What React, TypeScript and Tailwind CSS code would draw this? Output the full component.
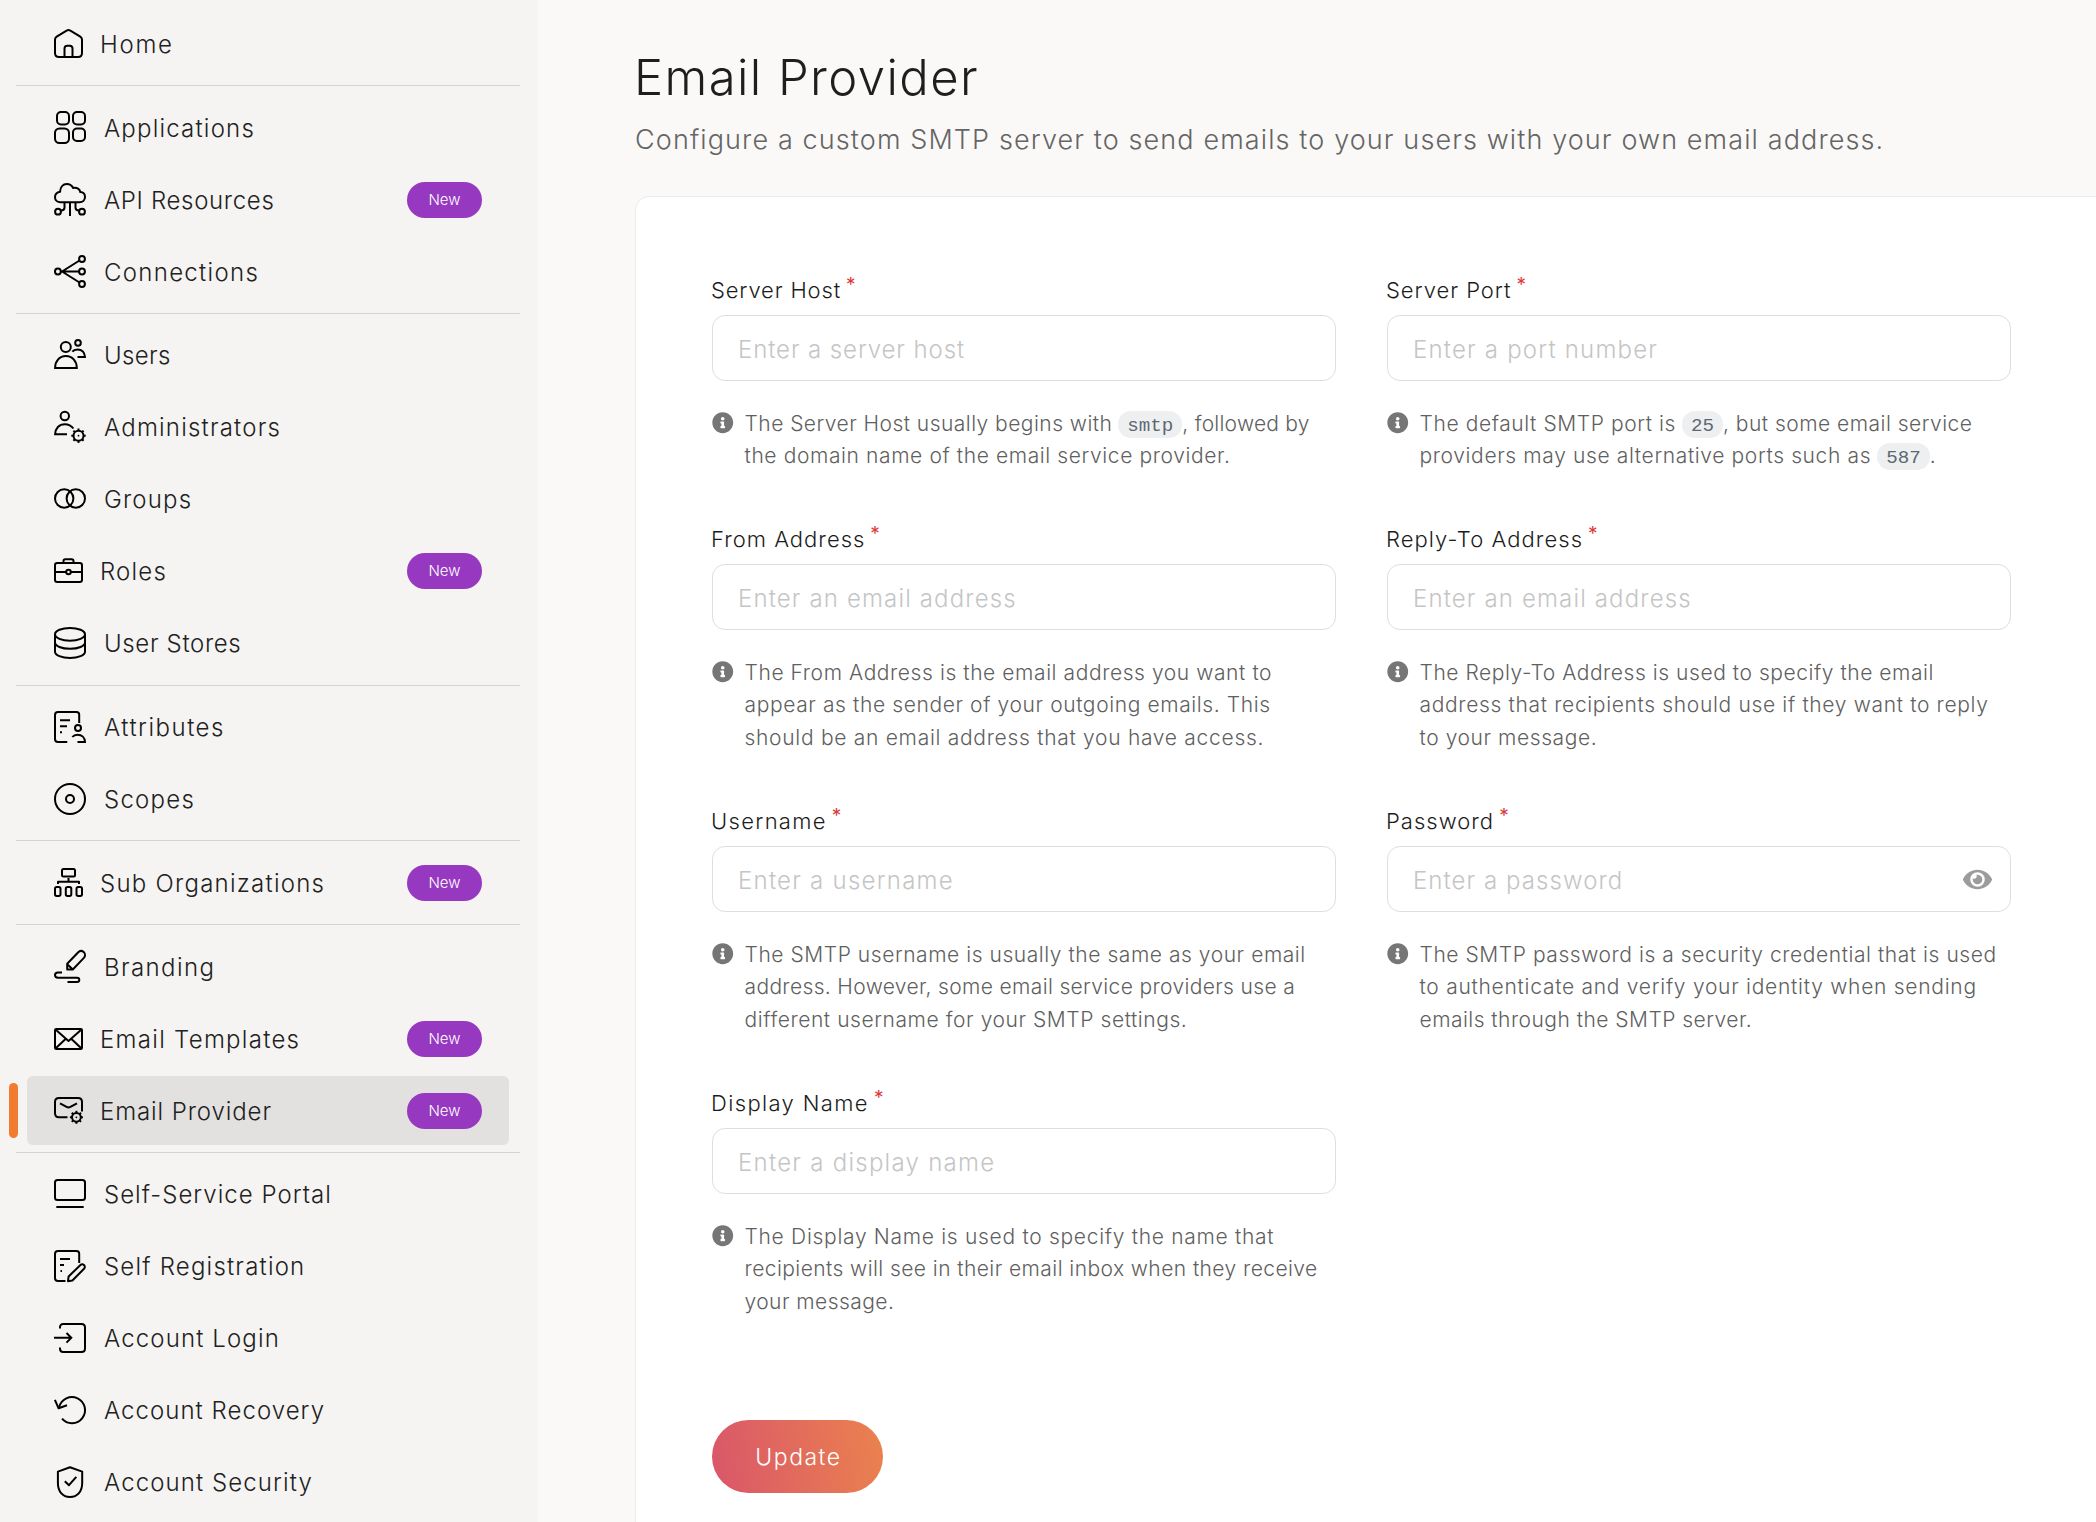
import React from "react";
import { FaEye, FaInfoCircle } from "react-icons/fa";

type IconProps = { w: number; h: number; children: React.ReactNode };

function Glyph({ w, h, children }: IconProps) {
  return (
    <svg
      width={w}
      height={h}
      viewBox={`0 0 ${w} ${h}`}
      fill="none"
      stroke="#000"
      strokeWidth={2}
      strokeLinecap="butt"
      strokeLinejoin="round"
      className="block shrink-0 overflow-visible"
    >
      {children}
    </svg>
  );
}

/* Small eight-tooth gear shared by the admin and mail-provider icons. */
function Gear({ cx, cy, r, t }: { cx: number; cy: number; r: number; t: number }) {
  return (
    <g>
      <circle cx={cx} cy={cy} r={r} />
      <circle cx={cx} cy={cy} r={0.9} fill="#000" stroke="none" />
      {[0, 45, 90, 135, 180, 225, 270, 315].map((a) => (
        <path key={a} d={`M${cx} ${cy - r}V${cy - r - t}`} transform={`rotate(${a} ${cx} ${cy})`} />
      ))}
    </g>
  );
}

const icons = {
  home: (
    <Glyph w={29} h={29}>
      <path d="M1 10.6c0-1.4.6-2.3 1.7-3L12.6 1.6c1.2-.8 2.6-.8 3.8 0l9.9 6c1.1.7 1.7 1.6 1.7 3V24c0 2.4-1.6 4-4 4H5c-2.4 0-4-1.6-4-4z" />
      <path d="M10.5 28v-8.500c0-1.800 1-2.800 2.800-2.800h2.400c1.800 0 2.800 1 2.800 2.800V28" />
    </Glyph>
  ),
  apps: (
    <Glyph w={32} h={33}>
      <rect x="3" y="1" width="12" height="12.500" rx="4" />
      <rect x="19" y="1" width="12" height="12.500" rx="4" />
      <rect x="1" y="17.500" width="14" height="14.500" rx="4.500" />
      <rect x="19" y="17.500" width="12" height="12.500" rx="4" />
    </Glyph>
  ),
  api: (
    <Glyph w={32} h={33}>
      <path d="M6.500 19.200H25.500c3.200 0 5.500-2.200 5.500-5.200 0-2.700-2-4.700-4.700-4.900C26 6.200 23 4.300 19.200 5 17.800 2.300 15.600 1 12.800 1 9 1 6.300 4 6.100 8.700 3 9.300 1 11.400 1 14.200c0 2.900 2.300 5 5.500 5z" />
      <path d="M10.500 19.500v5.200c0 1.700-1 2.600-3.600 2.800M16 19.500V33M21.500 19.500v5.200c0 1.700 1 2.600 3.600 2.800" />
      <circle cx="4" cy="28.700" r="2.900" />
      <circle cx="28" cy="28.700" r="2.900" />
    </Glyph>
  ),
  connections: (
    <Glyph w={32} h={33}>
      <circle cx="3.900" cy="16.500" r="2.900" />
      <circle cx="28" cy="4" r="2.900" />
      <circle cx="28" cy="16.500" r="2.900" />
      <circle cx="28" cy="29" r="2.900" />
      <path d="M25.500 5.500 8 16.500l17.500 11M6.800 16.500H25" />
    </Glyph>
  ),
  users: (
    <Glyph w={32} h={31}>
      <circle cx="11.800" cy="8" r="5" />
      <circle cx="24" cy="3.900" r="2.800" />
      <path strokeLinejoin="miter" d="M1.100 29h21.700c0-7-4.600-12-10.900-12S1.100 22 1.100 29z" />
      <path strokeLinejoin="miter" d="M18.300 12.700c1.200-1.600 3-2.300 5.200-2.300 4.400 0 7.300 3 7.500 7.600h-7.500" />
    </Glyph>
  ),
  admins: (
    <Glyph w={32} h={32}>
      <circle cx="10.800" cy="5" r="4.200" />
      <path strokeLinejoin="miter" d="M13 23.300H1.100c.2-6 4-10.100 9.700-10.100 3.800 0 6.500 1.400 8.600 4.300" />
      <Gear cx={24.500} cy={24.700} r={5} t={2.200} />
    </Glyph>
  ),
  groups: (
    <Glyph w={32} h={21}>
      <circle cx="10.200" cy="10.500" r="9.200" />
      <circle cx="21.800" cy="10.500" r="9.200" />
    </Glyph>
  ),
  roles: (
    <Glyph w={29} h={25}>
      <rect x="1" y="5" width="27" height="19" rx="2.200" />
      <path d="M9.500 5V3c0-1 .8-1.800 1.800-1.800h6.400c1 0 1.800.8 1.800 1.800v2M1 14h11M17 14h11" />
      <circle cx="14.500" cy="14" r="2.300" />
    </Glyph>
  ),
  stores: (
    <Glyph w={32} h={32}>
      <ellipse cx="16" cy="7.300" rx="15" ry="6.400" />
      <path d="M1 7.300v17.400C1 28.200 7.700 31 16 31s15-2.800 15-6.300V7.300" />
      <path d="M1 15.500c0 3.500 6.700 6.300 15 6.300s15-2.800 15-6.300" />
    </Glyph>
  ),
  attributes: (
    <Glyph w={32} h={32}>
      <path d="M13.300 31H4c-2 0-3-1-3-3V4c0-2 1-3 3-3h18.500c1.700 0 2.700 1 2.700 2.700V12" />
      <path d="M6 9.200h10M6 15.200h7M6 21.200h2" />
      <circle cx="24" cy="17" r="3" />
      <path strokeLinejoin="miter" d="M18.300 26c1.200-1.500 3-2.300 5.200-2.300 4.400 0 7.300 2.900 7.500 7.300h-7.500" />
    </Glyph>
  ),
  scopes: (
    <Glyph w={32} h={32}>
      <circle cx="16" cy="16" r="15" />
      <circle cx="16" cy="16" r="4" />
    </Glyph>
  ),
  suborgs: (
    <Glyph w={29} h={29}>
      <rect x="8" y="1" width="13" height="7.500" rx="1.500" />
      <path d="M14.500 10v3.700M4 16v-2.300h21V16" />
      <rect x="1" y="19" width="5.500" height="9" rx="1.700" />
      <rect x="11.800" y="19" width="5.500" height="9" rx="1.700" />
      <rect x="22.500" y="19" width="5.500" height="9" rx="1.700" />
    </Glyph>
  ),
  branding: (
    <Glyph w={32} h={33}>
      <path d="M13.200 19.500v-5.700L24 2.500c1.600-1.700 4-1.900 5.700-.4 1.700 1.600 1.700 4.100.2 5.800L18.800 19.500zM13.200 14.300l5.400 5" />
      <path d="M8 22.400H4c-1.900 0-3 1-3 2.700s1.100 2.700 3 2.700h19c1.500 0 2.300.7 2.300 2s-.8 2.200-2.300 2.200h-9.500" />
    </Glyph>
  ),
  templates: (
    <Glyph w={29} h={22}>
      <rect x="1" y="1" width="27" height="20" rx="1.200" />
      <path d="M1.500 1.500 14.500 13l13-11.500M1.500 20.500l10.300-9.800M27.500 20.500l-10.300-9.800" />
    </Glyph>
  ),
  provider: (
    <Glyph w={29} h={27}>
      <path d="M13.500 20.300H5c-2.600 0-4-1.500-4-4V5c0-2.500 1.500-4 4-4h19c2.500 0 4 1.500 4 4v9.500" />
      <path d="M6 6.300l6.600 3.600c1.300.7 2.500.7 3.800 0L23 6.300" />
      <Gear cx={22.400} cy={20.300} r={4.400} t={2.100} />
    </Glyph>
  ),
  portal: (
    <Glyph w={32} h={29}>
      <rect x="1" y="1" width="30" height="20" rx="2.500" />
      <path d="M2.300 28h27.400" />
    </Glyph>
  ),
  registration: (
    <Glyph w={32} h={32}>
      <path d="M11.500 31H4c-2 0-3-1-3-3V4c0-2 1-3 3-3h18.500c1.700 0 2.700 1 2.700 2.700V13" />
      <path d="M6 9h10M6 15h4M6.500 21h1.500" />
      <path d="M14 31.200l.6-4.700 11.600-11.300c1.200-1.200 2.700-1.200 3.800-.2s1.100 2.600 0 3.800L18.400 30.500z" />
    </Glyph>
  ),
  login: (
    <Glyph w={32} h={30}>
      <path d="M6 5.500V4.200C6 2.200 7.200 1 9.200 1H27.500C29.800 1 31 2.200 31 4.500v21c0 2.300-1.200 3.500-3.500 3.500H9.200C7.200 29 6 27.800 6 25.800v-1.300" />
      <path strokeLinejoin="miter" d="M0 14.800h17M12.500 10l4.800 4.800-4.800 4.800" />
    </Glyph>
  ),
  recovery: (
    <Glyph w={32} h={28}>
      <path d="M5.200 11A13.100 13.100 0 1 1 8 22.700" />
      <path d="M.9 3.800 4.600 12.300 13 9.300" />
    </Glyph>
  ),
  security: (
    <Glyph w={32} h={32}>
      <path d="M16 1.200 28.200 5.600V17c0 8.300-4.700 14-12.200 14S3.900 25.300 3.900 17V5.600z" />
      <path d="M10.800 15.200l4.200 4 7.300-8.400" />
    </Glyph>
  ),
};

type NavItem = {
  label: string;
  icon: keyof typeof icons;
  tracking: string;
  compact?: boolean;
  badge?: boolean;
  active?: boolean;
};

const groups: { pad: string; items: NavItem[] }[] = [
  { pad: "pt-2 pb-[5px]", items: [{ label: "Home", icon: "home", tracking: "tracking-[1.7px]", compact: true }] },
  {
    pad: "pt-1.5 pb-[5px]",
    items: [
      { label: "Applications", icon: "apps", tracking: "tracking-[1.2px]" },
      { label: "API Resources", icon: "api", tracking: "tracking-[0.67px]", badge: true },
      { label: "Connections", icon: "connections", tracking: "tracking-[1.3px]" },
    ],
  },
  {
    pad: "pt-[5px] pb-1.5",
    items: [
      { label: "Users", icon: "users", tracking: "tracking-[0.35px]" },
      { label: "Administrators", icon: "admins", tracking: "tracking-[1.2px]" },
      { label: "Groups", icon: "groups", tracking: "tracking-[1.15px]" },
      { label: "Roles", icon: "roles", tracking: "tracking-[1.2px]", compact: true, badge: true },
      { label: "User Stores", icon: "stores", tracking: "tracking-[0.65px]" },
    ],
  },
  {
    pad: "py-[5px]",
    items: [
      { label: "Attributes", icon: "attributes", tracking: "tracking-[1.5px]" },
      { label: "Scopes", icon: "scopes", tracking: "tracking-[1.25px]" },
    ],
  },
  {
    pad: "pt-1.5 pb-[5px]",
    items: [{ label: "Sub Organizations", icon: "suborgs", tracking: "tracking-[1.25px]", compact: true, badge: true }],
  },
  {
    pad: "pt-1.5 pb-[5px]",
    items: [
      { label: "Branding", icon: "branding", tracking: "tracking-[1.4px]" },
      { label: "Email Templates", icon: "templates", tracking: "tracking-[1.28px]", compact: true, badge: true },
      { label: "Email Provider", icon: "provider", tracking: "tracking-[0.9px]", compact: true, badge: true, active: true },
    ],
  },
  {
    pad: "pt-[5px]",
    items: [
      { label: "Self-Service Portal", icon: "portal", tracking: "tracking-[1.02px]" },
      { label: "Self Registration", icon: "registration", tracking: "tracking-[1.2px]" },
      { label: "Account Login", icon: "login", tracking: "tracking-[1.13px]" },
      { label: "Account Recovery", icon: "recovery", tracking: "tracking-[1.04px]" },
      { label: "Account Security", icon: "security", tracking: "tracking-[1.09px]" },
    ],
  },
];

function NavRow({ item }: { item: NavItem }) {
  return (
    <div className="relative h-[72px] pt-px pr-[29px] pl-[27px]">
      {item.active && <span className="absolute top-2 left-[9px] h-[55px] w-[9px] rounded-full bg-[#f17c2f]" />}
      <a className={`flex h-[69px] items-center rounded-md pr-[27px] pl-[27px] ${item.active ? "bg-[#e2e1df]" : ""}`}>
        <span className={item.compact ? "w-[46px]" : "w-[50px]"}>{icons[item.icon]}</span>
        <span className={`grow pt-0.5 text-2xl whitespace-nowrap text-[#212121] ${item.tracking}`}>{item.label}</span>
        {item.badge && (
          <span className="flex h-9 w-[75px] items-center justify-center rounded-full bg-[#9638c0] pt-0.5 text-[15px] text-white">
            New
          </span>
        )}
      </a>
    </div>
  );
}

type Piece = { text: string; tracking?: string; code?: boolean };
type Field = {
  label: string;
  labelTracking: string;
  placeholder: string;
  placeholderTracking: string;
  password?: boolean;
  hint: Piece[][];
};

const fields: Field[] = [
  {
    label: "Server Host",
    labelTracking: "tracking-[0.84px]",
    placeholder: "Enter a server host",
    placeholderTracking: "tracking-[0.9px]",
    hint: [
      [
        { text: "The Server Host usually begins with", tracking: "tracking-[0.46px]" },
        { text: "smtp", code: true },
        { text: ", followed by", tracking: "tracking-[0.24px]" },
      ],
      [{ text: "the domain name of the email service provider.", tracking: "tracking-[0.61px]" }],
    ],
  },
  {
    label: "Server Port",
    labelTracking: "tracking-[0.94px]",
    placeholder: "Enter a port number",
    placeholderTracking: "tracking-[1.2px]",
    hint: [
      [
        { text: "The default SMTP port is", tracking: "tracking-[0.59px]" },
        { text: "25", code: true },
        { text: ", but some email service", tracking: "tracking-[0.48px]" },
      ],
      [
        { text: "providers may use alternative ports such as", tracking: "tracking-[0.63px]" },
        { text: "587", code: true },
        { text: "." },
      ],
    ],
  },
  {
    label: "From Address",
    labelTracking: "tracking-[1px]",
    placeholder: "Enter an email address",
    placeholderTracking: "tracking-[1.14px]",
    hint: [
      [{ text: "The From Address is the email address you want to", tracking: "tracking-[0.58px]" }],
      [{ text: "appear as the sender of your outgoing emails. This", tracking: "tracking-[0.61px]" }],
      [{ text: "should be an email address that you have access.", tracking: "tracking-[0.71px]" }],
    ],
  },
  {
    label: "Reply-To Address",
    labelTracking: "tracking-[1.05px]",
    placeholder: "Enter an email address",
    placeholderTracking: "tracking-[1.14px]",
    hint: [
      [{ text: "The Reply-To Address is used to specify the email", tracking: "tracking-[0.55px]" }],
      [{ text: "address that recipients should use if they want to reply", tracking: "tracking-[0.66px]" }],
      [{ text: "to your message.", tracking: "tracking-[0.58px]" }],
    ],
  },
  {
    label: "Username",
    labelTracking: "tracking-[1.3px]",
    placeholder: "Enter a username",
    placeholderTracking: "tracking-[1.24px]",
    hint: [
      [{ text: "The SMTP username is usually the same as your email", tracking: "tracking-[0.55px]" }],
      [{ text: "address. However, some email service providers use a", tracking: "tracking-[0.35px]" }],
      [{ text: "different username for your SMTP settings.", tracking: "tracking-[0.57px]" }],
    ],
  },
  {
    label: "Password",
    labelTracking: "tracking-[1.02px]",
    placeholder: "Enter a password",
    placeholderTracking: "tracking-[1.06px]",
    password: true,
    hint: [
      [{ text: "The SMTP password is a security credential that is used", tracking: "tracking-[0.56px]" }],
      [{ text: "to authenticate and verify your identity when sending", tracking: "tracking-[0.73px]" }],
      [{ text: "emails through the SMTP server.", tracking: "tracking-[0.47px]" }],
    ],
  },
  {
    label: "Display Name",
    labelTracking: "tracking-[1.36px]",
    placeholder: "Enter a display name",
    placeholderTracking: "tracking-[1.26px]",
    hint: [
      [{ text: "The Display Name is used to specify the name that", tracking: "tracking-[0.7px]" }],
      [{ text: "recipients will see in their email inbox when they receive", tracking: "tracking-[0.43px]" }],
      [{ text: "your message.", tracking: "tracking-[0.45px]" }],
    ],
  },
];

function FormField({ field }: { field: Field }) {
  return (
    <div>
      <label className="-ml-px flex items-start text-[22px] leading-7 text-[#1c1c1c]">
        <span className={`whitespace-nowrap ${field.labelTracking}`}>{field.label}</span>
        <span className="-mt-px ml-[5px] text-[19px] leading-none font-normal text-[#d93a3a]">*</span>
      </label>
      <div className="mt-[11px] flex h-[66px] items-center rounded-[13px] border border-[#dedede] bg-white pr-[18px] pl-[25px]">
        <input
          type={field.password ? "password" : "text"}
          placeholder={field.placeholder}
          className={`min-w-0 grow pt-[3px] text-2xl outline-none placeholder:text-[#c5c5c5] ${field.placeholderTracking}`}
        />
        {field.password && <FaEye className="size-[29px] shrink-0 text-[#9c9c9c]" />}
      </div>
      <div className="mt-[27px] flex text-[21px] leading-[32.25px] text-[#606060]">
        <FaInfoCircle className="mt-1 mr-[11px] size-[21.500px] shrink-0 text-[#767676]" />
        <div>
          {field.hint.map((line, i) => (
            <div key={i} className="whitespace-nowrap">
              {line.map((p) =>
                p.code ? (
                  <code
                    key={p.text}
                    className="ml-1.5 rounded-[13px] bg-[#edeff1] px-[9px] pt-1 pb-px font-['Liberation_Mono',monospace] text-[19.2px] leading-none text-[#5d6872]"
                  >
                    {p.text}
                  </code>
                ) : (
                  <span key={p.text} className={p.tracking}>
                    {p.text}
                  </span>
                ),
              )}
            </div>
          ))}
        </div>
      </div>
    </div>
  );
}

export default function App() {
  return (
    <div className="flex h-[1522px] w-[2096px] overflow-hidden bg-[#faf9f8] font-['Inter',sans-serif] font-[350]">
      <nav className="w-[538px] shrink-0 bg-[#f5f4f2]">
        {groups.map((g, i) => (
          <React.Fragment key={i}>
            {i > 0 && <div className="mr-[18px] ml-4 h-px bg-[#d4d4d3]" />}
            <div className={g.pad}>
              {g.items.map((item) => (
                <NavRow key={item.label} item={item} />
              ))}
            </div>
          </React.Fragment>
        ))}
      </nav>
      <main className="flex grow flex-col pt-12 pl-[97px]">
        <h1 className="-ml-px text-[49px] leading-[60px] tracking-[1.4px] text-[#1e1e1e]">Email Provider</h1>
        <p className="mt-3 text-[27px] leading-10 tracking-[1.11px] whitespace-nowrap text-[#656565]">
          Configure a custom SMTP server to send emails to your users with your own email address.
        </p>
        <section className="mt-9 -mr-20 -mb-10 grow rounded-tl-[14px] border border-[#e9ebec] bg-white pt-[79px] pl-[76px]">
          <div className="grid grid-cols-[624px_624px] grid-rows-[195px_228px_228px_228px] gap-x-[51px] gap-y-[54px]">
            {fields.map((f) => (
              <FormField key={f.label} field={f} />
            ))}
          </div>
          <button className="mt-[103px] flex h-[73px] w-[171px] items-center justify-center rounded-full bg-linear-[80deg,#d9566a,#eb824e] pt-0.5 pl-0.5 text-[23px] tracking-[1.5px] text-white">
            Update
          </button>
        </section>
      </main>
    </div>
  );
}
